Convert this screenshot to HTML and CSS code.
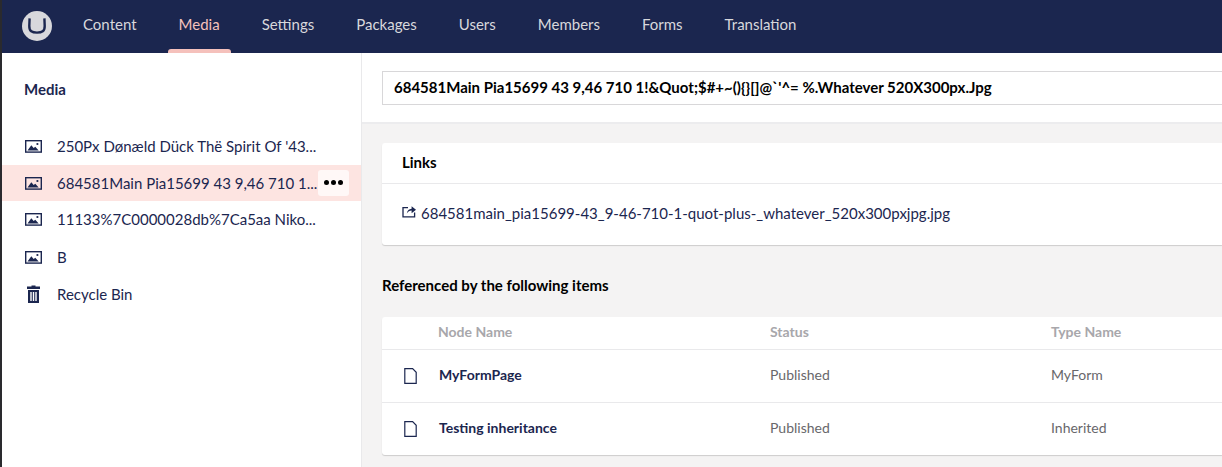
FILE: index.html
```html
<!DOCTYPE html>
<html lang="en">
<head>
<meta charset="utf-8">
<title>Media</title>
<link rel="stylesheet" href="styles.css">
</head>
<body>
<div class="app">
  <header class="topbar">
    <div class="logo"><svg viewBox="0 0 30 30" width="30" height="30"><circle cx="15" cy="15" r="15" fill="#d8d8dc"/><path d="M7.6 7.4 L7.3 15 C7.2 20.2 10 21.6 15 21.6 C20 21.6 22.8 20.2 22.7 15 L22.4 7.4" fill="none" stroke="#1b264f" stroke-width="2.4"/></svg></div>
    <nav class="nav">
      <a class="nav-item">Content</a>
      <a class="nav-item active">Media</a>
      <a class="nav-item">Settings</a>
      <a class="nav-item">Packages</a>
      <a class="nav-item">Users</a>
      <a class="nav-item">Members</a>
      <a class="nav-item">Forms</a>
      <a class="nav-item">Translation</a>
    </nav>
  </header>
  <div class="main">
    <aside class="sidebar">
      <h2 class="tree-title">Media</h2>
      <ul class="tree">
        <li class="tree-row"><svg class="ti" viewBox="0 0 17 13"><use href="#img"/></svg><span class="tree-label">250Px Dønæld Dück Thë Spirit Of '43...</span></li>
        <li class="tree-row selected"><svg class="ti" viewBox="0 0 17 13"><use href="#img"/></svg><span class="tree-label">684581Main Pia15699 43 9,46 710 1...</span><button class="more"><i></i><i></i><i></i></button></li>
        <li class="tree-row"><svg class="ti" viewBox="0 0 17 13"><use href="#img"/></svg><span class="tree-label">11133%7C0000028db%7Ca5aa Niko...</span></li>
        <li class="tree-row"><svg class="ti" viewBox="0 0 17 13"><use href="#img"/></svg><span class="tree-label">B</span></li>
        <li class="tree-row"><svg class="ti bin" viewBox="0 0 15 18"><path d="M5.5 1.6V.5h4v1.1H14V4H1V1.6zM2 5h11v13H2zM4.3 7v9h1.4V7zM6.8 7v9h1.4V7zM9.3 7v9h1.4V7z" fill="#1b264f" fill-rule="evenodd"/></svg><span class="tree-label">Recycle Bin</span></li>
      </ul>
    </aside>
    <section class="editor">
      <div class="editor-head">
        <div class="name-input">684581Main Pia15699 43 9,46 710 1!&amp;Quot;$#+~(){}[]@`'^= %.Whatever 520X300px.Jpg</div>
      </div>
      <div class="editor-body">
        <div class="card links">
          <div class="card-title">Links</div>
          <div class="card-body"><svg class="ext" viewBox="0 0 14 13"><path d="M12.6 7.5v4.3H1V2.6h5" fill="none" stroke="#1b264f" stroke-width="1.3"/><path d="M4.8 8.6C5.3 5.6 7 4 9.6 3.8V1.2L14 4.8 9.6 8.2V5.6C7.6 5.6 6 6.6 4.8 8.6z" fill="#1b264f"/></svg><a class="link">684581main_pia15699-43_9-46-710-1-quot-plus-_whatever_520x300pxjpg.jpg</a></div>
        </div>
        <h3 class="ref-title">Referenced by the following items</h3>
        <div class="card table">
          <div class="tr th"><span class="c-icon"></span><span class="c-name">Node Name</span><span class="c-status">Status</span><span class="c-type">Type Name</span></div>
          <div class="tr"><span class="c-icon"><svg class="doc" viewBox="0 0 13 16"><use href="#doc"/></svg></span><span class="c-name strong">MyFormPage</span><span class="c-status">Published</span><span class="c-type">MyForm</span></div>
          <div class="tr"><span class="c-icon"><svg class="doc" viewBox="0 0 13 16"><use href="#doc"/></svg></span><span class="c-name strong">Testing inheritance</span><span class="c-status">Published</span><span class="c-type">Inherited</span></div>
        </div>
      </div>
    </section>
  </div>
</div>
<svg class="defs" width="0" height="0">
  <defs>
    <g id="img"><rect x=".7" y=".7" width="15.6" height="11.4" fill="none" stroke="#1b264f" stroke-width="1.4"/><path d="M2.5 10.4 6.3 5.3l2.4 2.8 1.6-1.4 3.4 3.7z" fill="#1b264f"/><circle cx="12.4" cy="4" r="1.1" fill="#1b264f"/></g>
    <path id="doc" d="M.8.7H8.6L12.2 4.3V15.3H.8z" fill="#fff" stroke="#1b264f" stroke-width="1.2"/>
  </defs>
</svg>
</body>
</html>
```
FILE: styles.css
```css
* { box-sizing: border-box; }
html, body { margin: 0; height: 100%; overflow: hidden; }
body { font-family: Lato, "Open Sans", sans-serif; font-size: 15px; color: #1b264f; background: #fff; border-left: 2px solid #2a2a2e; }
.app { display: flex; flex-direction: column; height: 467px; overflow: hidden; }
.topbar { height: 53px; background: #1b264f; display: flex; align-items: center; flex: none; padding-left: 20px; padding-bottom: 2px; }
.logo { width: 30px; height: 30px; flex: none; margin-right: 10px; display: flex; }
.nav { display: flex; height: 53px; margin-bottom: -2px; }
.nav-item { position: relative; display: flex; align-items: center; padding: 0 21px 5px; color: #d8d8dc; font-size: 15px; }
.nav-item.active { color: #f5c1bc; }
.nav-item.active::after { content: ""; position: absolute; left: 10px; right: 10px; bottom: 0; height: 4px; background: #f5c1bc; border-radius: 3px 3px 0 0; }
.main { flex: 1; display: flex; min-height: 0; }
.sidebar { width: 360px; flex: none; background: #fff; border-right: 1px solid #e9e9eb; }
.tree-title { margin: 0; padding: 27px 0 0 22px; font-size: 15px; line-height: 18px; font-weight: 700; height: 74px; color: #1b264f; }
.tree { list-style: none; margin: 0; padding: 0; }
.tree-row { display: flex; align-items: center; height: 37.5px; padding-left: 23px; position: relative; }
.tree-row.selected { background: #fde4e1; height: 36px; }
.ti { width: 17px; height: 13px; flex: none; margin-right: 15px; margin-top: 1px; }
.ti.bin { height: 18px; width: 17px; margin-top: 0; }
.tree-label { white-space: nowrap; font-size: 15px; color: #1b264f; }
.more { position: absolute; left: 316px; top: 5px; width: 31px; height: 26px; border: 0; border-radius: 3px; background: #fff8f7; display: flex; align-items: center; justify-content: center; gap: 2px; padding: 0; }
.more i { width: 5px; height: 5px; border-radius: 50%; background: #000; }
.editor { flex: 1; min-width: 0; background: #f4f3f3; display: flex; flex-direction: column; }
.editor-head { height: 71px; flex: none; background: #fff; border-bottom: 2px solid #ececee; padding: 18px 0 0 20px; }
.name-input { height: 34px; border: 1px solid #d8d7d9; border-right: 0; padding-left: 11px; line-height: 31px; font-weight: 700; font-size: 15px; color: #000; white-space: nowrap; overflow: hidden; }
.editor-body { padding: 19px 0 0 20px; }
.card { background: #fff; border-radius: 3px 0 0 3px; box-shadow: 0 1px 1px rgba(0,0,0,.16); }
.links { height: 102px; }
.card-title { height: 41px; border-bottom: 1px solid #e9e9eb; padding-left: 20px; line-height: 38px; font-weight: 700; font-size: 15px; color: #000; }
.card-body { padding: 18px 0 0 20px; display: flex; align-items: center; line-height: 22px; }
.ext { width: 14px; height: 13px; flex: none; margin-right: 5px; margin-top: -4px; }
.link { font-size: 15px; color: #1b264f; white-space: nowrap; }
.ref-title { margin: 0; padding-top: 31px; height: 72px; font-size: 15px; line-height: 18px; font-weight: 700; color: #000; }
.table { height: 138px; }
.tr { display: flex; align-items: center; height: 53px; border-top: 1px solid #e9e9eb; font-size: 14px; color: #68676b; padding-bottom: 3px; }
.tr.th { height: 32px; border-top: 0; font-weight: 700; color: #a8a7ab; padding-bottom: 3px; font-size: 14px; }
.c-icon { width: 56px; flex: none; padding-left: 22px; display: flex; }
.c-name { width: 332px; flex: none; }
.strong { font-weight: 700; color: #1b264f; padding-left: 1px; }
.c-status { width: 281px; flex: none; }
.c-type { flex: 1; }
.doc { width: 13px; height: 16px; margin-top: 2px; }
.defs { position: absolute; }
```
